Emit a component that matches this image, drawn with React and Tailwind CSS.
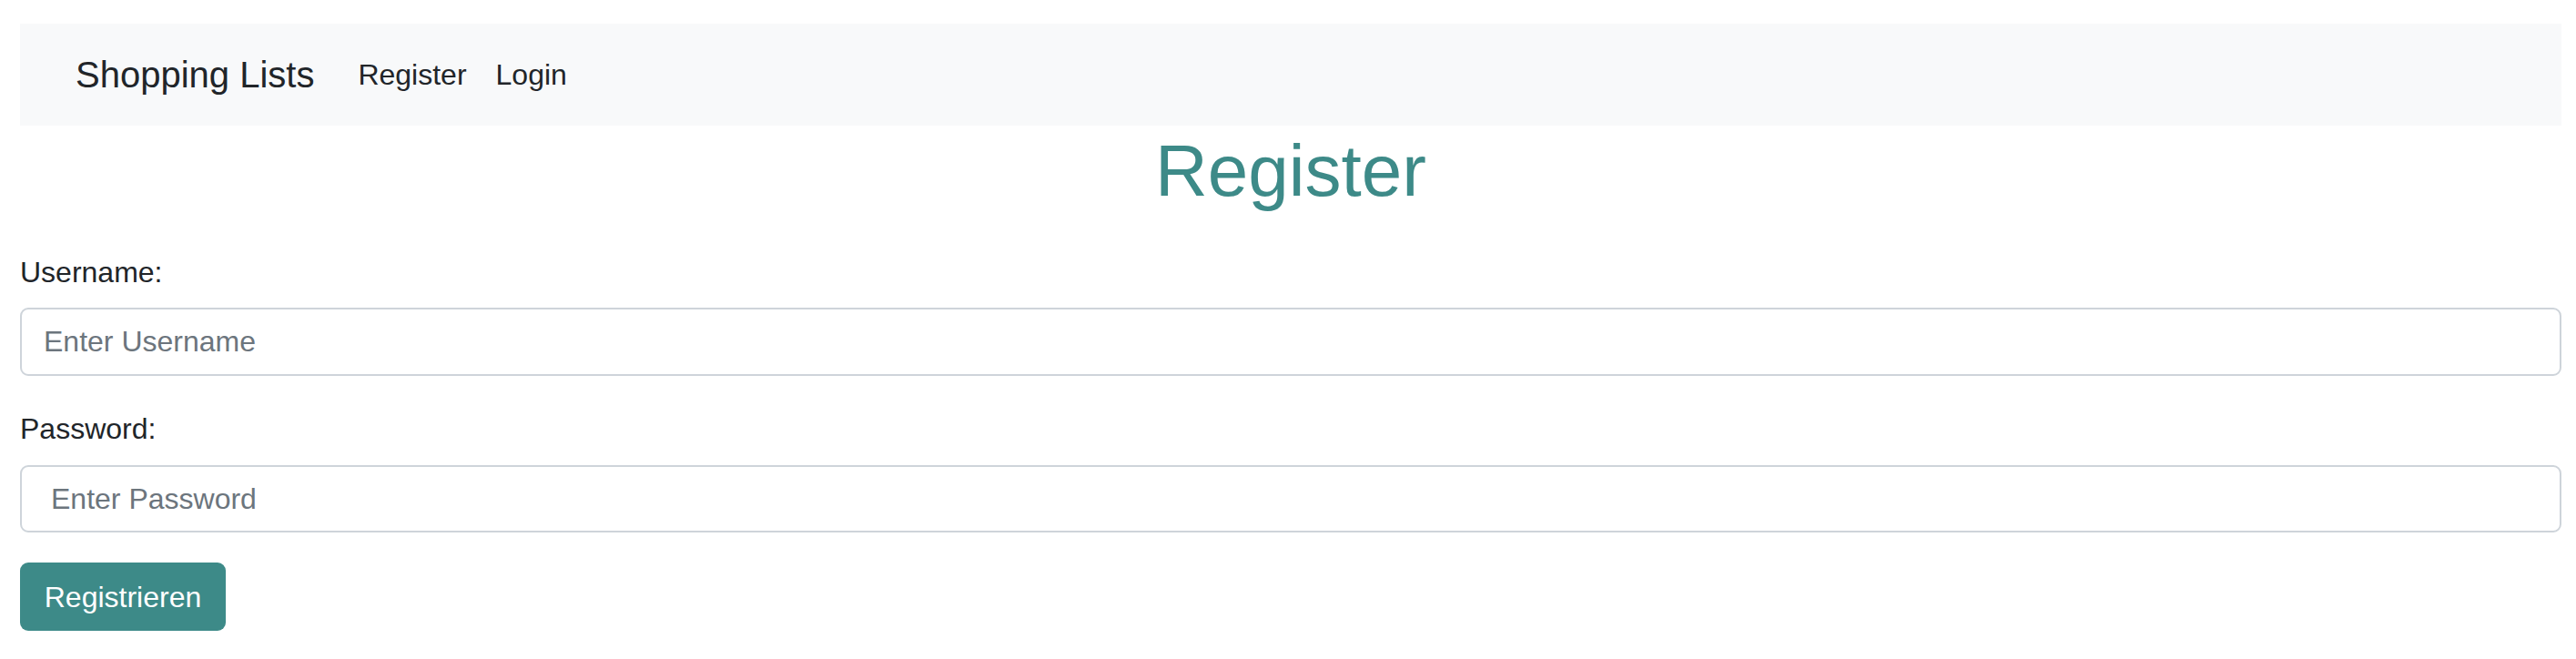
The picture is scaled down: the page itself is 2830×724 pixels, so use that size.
import { useState } from "react";

export default function App() {
  const [username, setUsername] = useState("");
  const [password, setPassword] = useState("");

  const handleSubmit = (e) => {
    e.preventDefault();
  };

  return (
    <div
      className="min-h-screen bg-white pl-[22px] pr-[16px] pt-[26px] text-[#212529]"
      style={{ fontFamily: '"Liberation Sans", Arial, sans-serif' }}
    >
      <nav className="flex h-[112px] items-center bg-[#f8f9fa] pl-[61px]">
        <a href="#" className="mr-[32px] text-[40px] leading-[60px] text-[#212529]">
          Shopping Lists
        </a>
        <a href="#" className="px-[16px] text-[32px] leading-[48px] text-[#212529]">
          Register
        </a>
        <a href="#" className="px-[16px] text-[32px] leading-[48px] text-[#212529]">
          Login
        </a>
      </nav>

      <h1 className="mt-[2px] text-center text-[80px] leading-[96px] text-[#3d8a88]">
        Register
      </h1>

      <form onSubmit={handleSubmit}>
        <div className="mt-[39px]">
          <label htmlFor="username" className="block text-[32px] leading-[48px]">
            Username:
          </label>
          <input
            id="username"
            type="text"
            value={username}
            onChange={(e) => setUsername(e.target.value)}
            placeholder="Enter Username"
            className="mt-[15px] block h-[75px] w-full rounded-[9px] border-2 border-[#ced4da] bg-white pl-[24px] text-[32px] leading-[48px] text-[#212529] outline-none placeholder:text-[#6c757d]"
          />
        </div>

        <div className="mt-[34px]">
          <label htmlFor="password" className="block text-[32px] leading-[48px]">
            Password:
          </label>
          <input
            id="password"
            type="password"
            value={password}
            onChange={(e) => setPassword(e.target.value)}
            placeholder="Enter Password"
            className="mt-[16px] block h-[74px] w-full rounded-[9px] border-2 border-[#ced4da] bg-white pl-[32px] text-[32px] leading-[48px] text-[#212529] outline-none placeholder:text-[#6c757d]"
          />
        </div>

        <button
          type="submit"
          className="mt-[33px] flex h-[75px] w-[226px] items-center justify-center rounded-[9px] bg-[#3d8a88] text-[32px] leading-[48px] text-white"
        >
          Registrieren
        </button>
      </form>
    </div>
  );
}
